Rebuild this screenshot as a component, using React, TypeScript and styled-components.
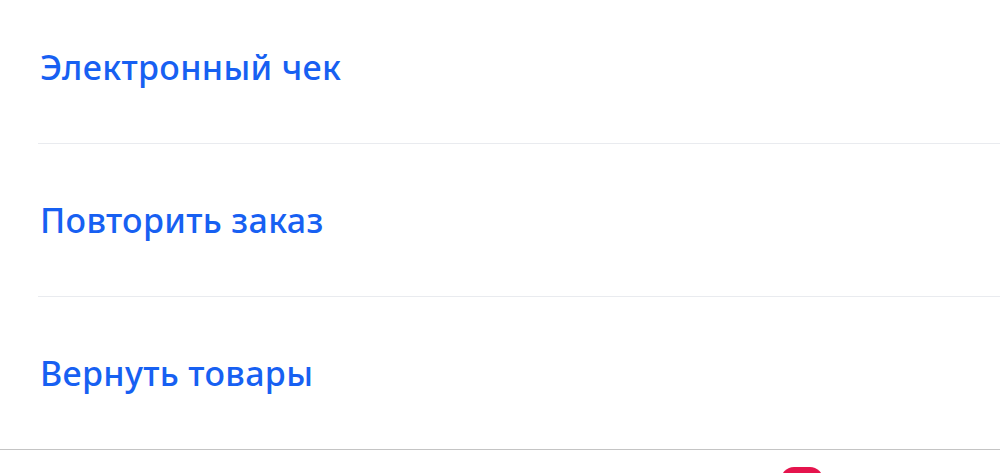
import React from 'react';
import styled, { createGlobalStyle } from 'styled-components';

const GlobalStyle = createGlobalStyle`
  html, body {
    margin: 0;
    padding: 0;
    background: #ffffff;
    overflow: hidden;
  }
  body {
    font-family: "Noto Sans", Lato, sans-serif;
  }
`;

const Page = styled.div`
  width: 1000px;
  height: 473px;
  display: flex;
  flex-direction: column;
  overflow: hidden;
`;

const ActionList = styled.div`
  display: flex;
  flex-direction: column;
  margin-top: -9px;
`;

const ActionRow = styled.div<{ $last?: boolean }>`
  height: 152px;
  margin-left: ${p => (p.$last ? '0' : '38px')};
  padding-left: ${p => (p.$last ? '40px' : '2px')};
  display: flex;
  align-items: center;
  border-bottom: 1px solid ${p => (p.$last ? '#c4c4c4' : '#e9ebef')};
  cursor: pointer;
`;

const ActionLabel = styled.span`
  font-size: 34px;
  font-weight: 500;
  color: #1760f2;
  letter-spacing: 0.35px;
`;

const BottomBar = styled.div`
  flex: 1;
  display: flex;
  align-items: flex-start;
  padding-left: 781px;
  padding-top: 17px;
`;

const Badge = styled.div`
  width: 42px;
  height: 30px;
  border-radius: 13px;
  background: #e5144d;
`;

const actions = ['Электронный чек', 'Повторить заказ', 'Вернуть товары'];

const App: React.FC = () => {
  return (
    <Page>
      <GlobalStyle />
      <ActionList>
        {actions.map((label, i) => (
          <ActionRow key={label} $last={i === actions.length - 1}>
            <ActionLabel>{label}</ActionLabel>
          </ActionRow>
        ))}
      </ActionList>
      <BottomBar>
        <Badge />
      </BottomBar>
    </Page>
  );
};

export default App;
